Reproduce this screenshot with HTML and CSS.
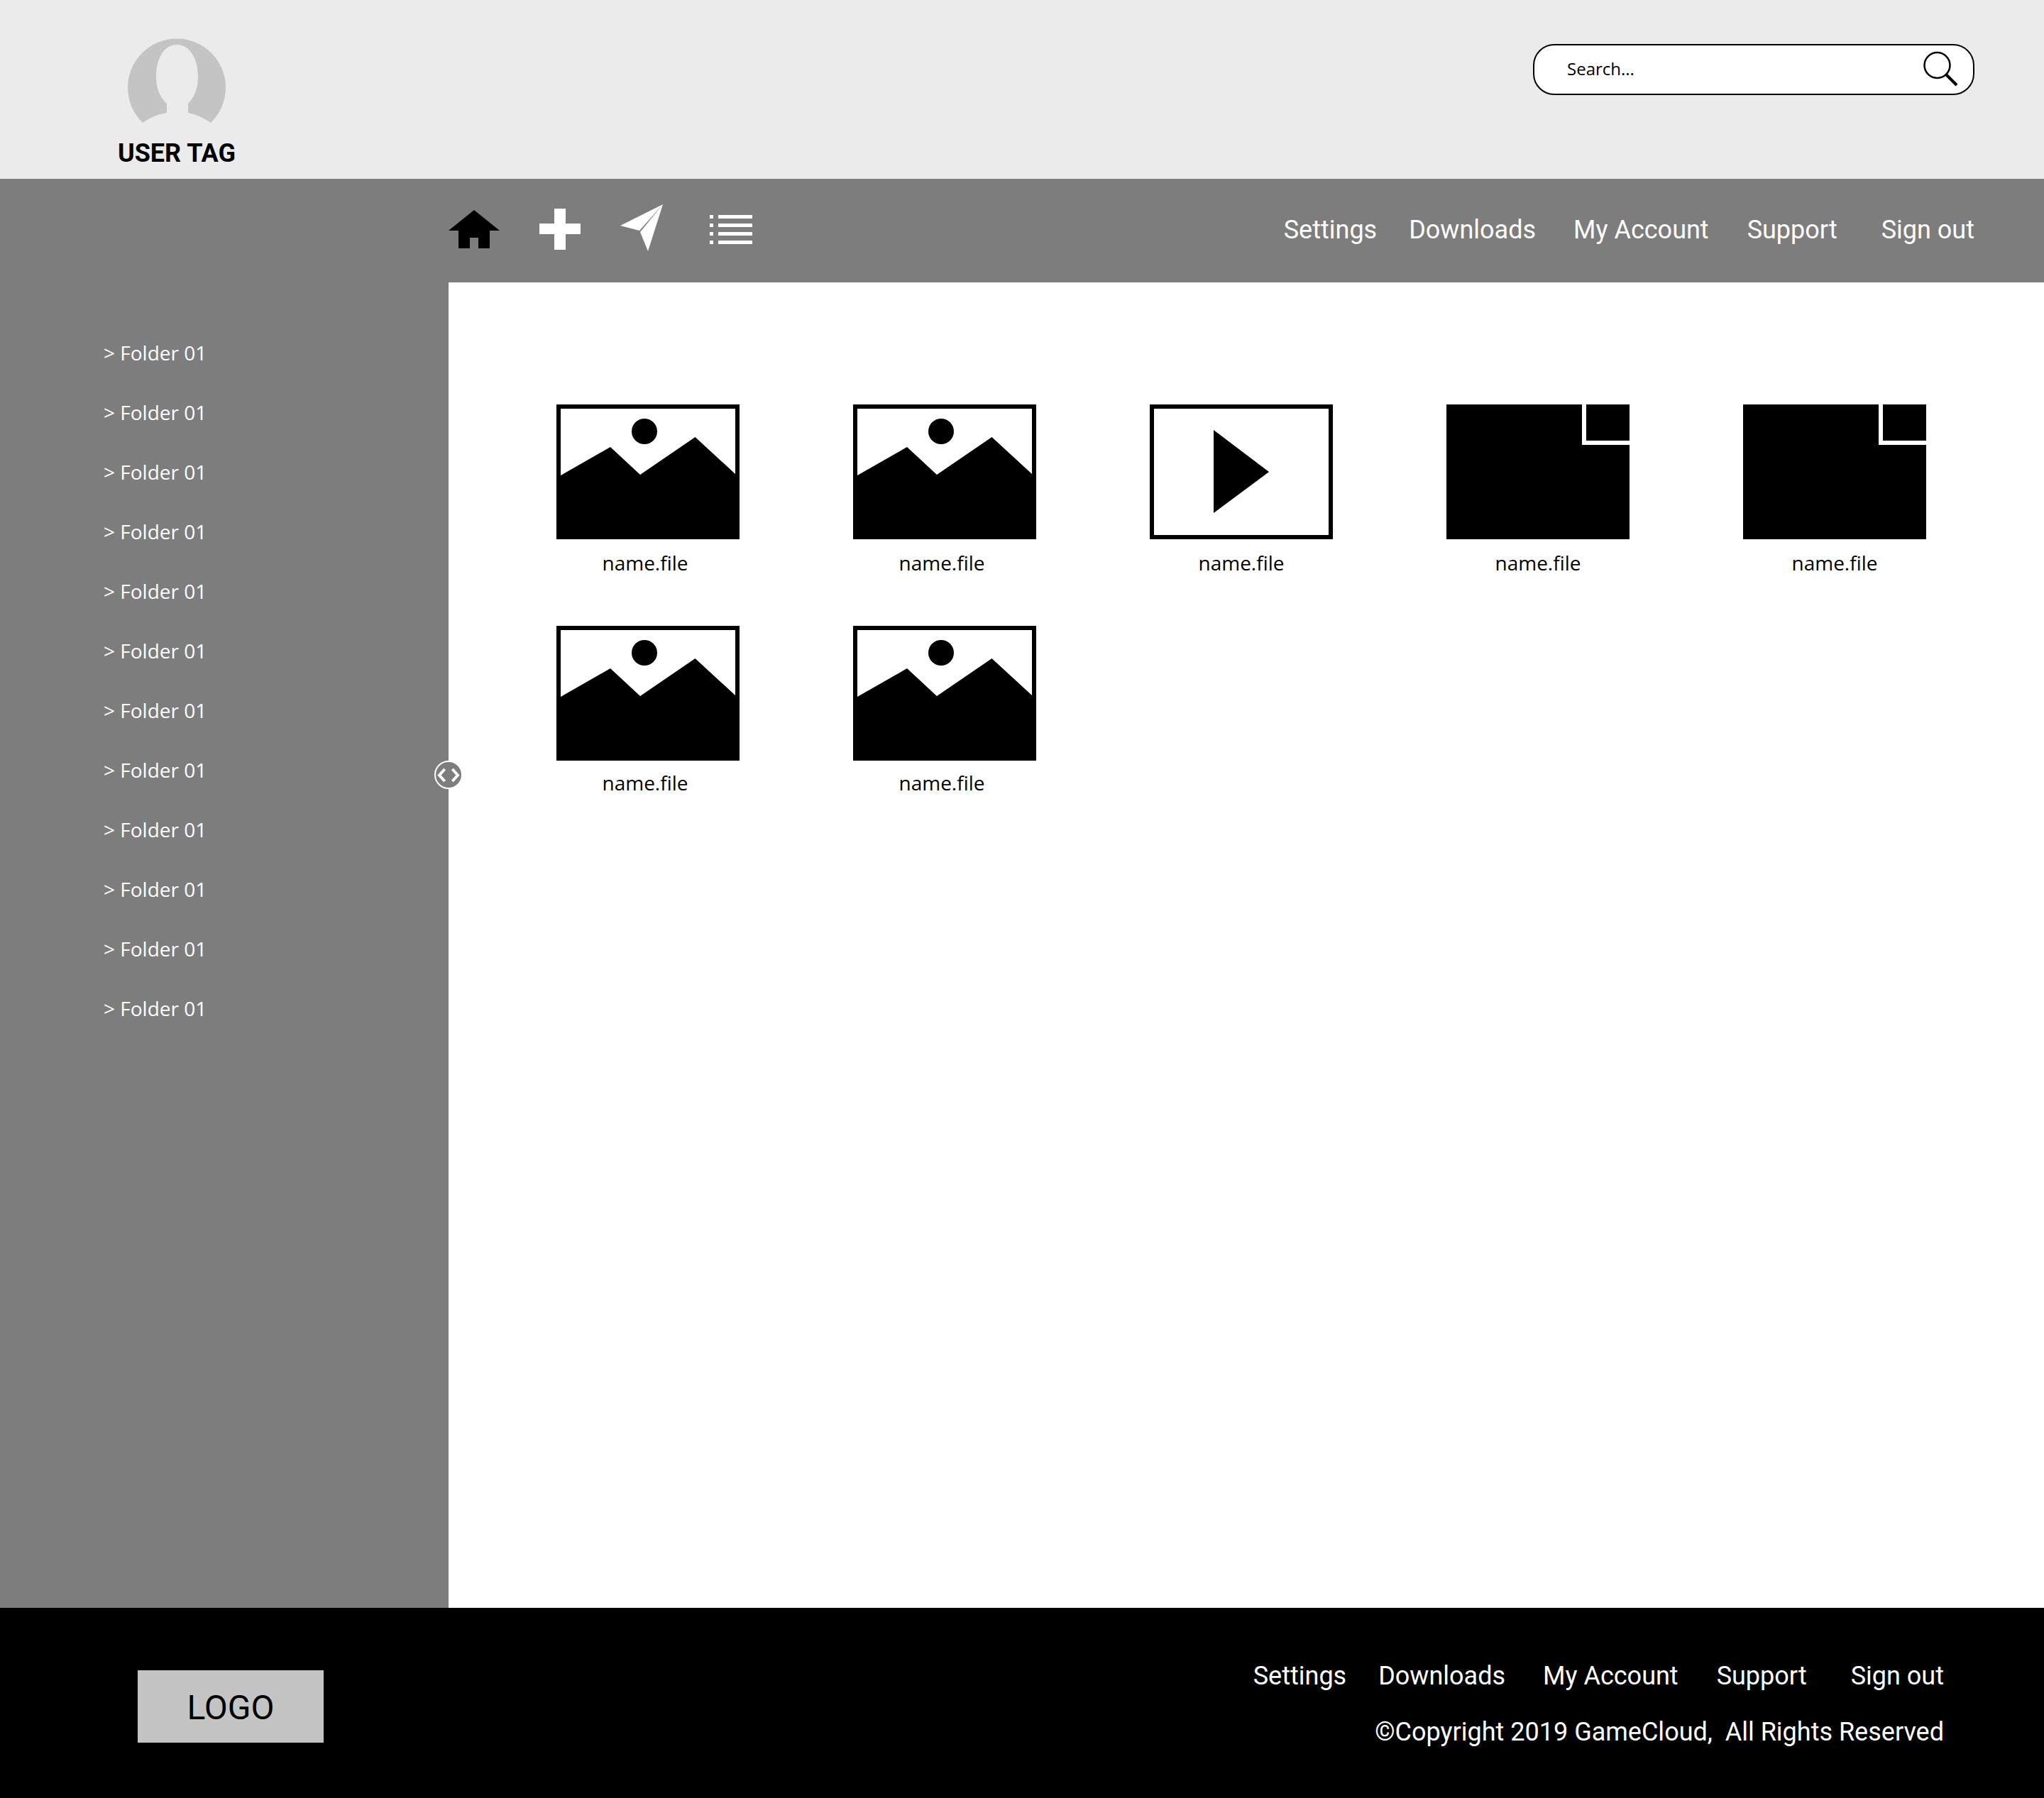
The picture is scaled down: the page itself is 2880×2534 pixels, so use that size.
FILE: index.html
```html
<!DOCTYPE html>
<html lang="en">
<head>
<meta charset="utf-8">
<title>GameCloud</title>
<link rel="stylesheet" href="styles.css">
</head>
<body>
<div class="page">
  <header class="top">
    <div class="user">
      <svg class="avatar" viewBox="0 0 138 120" width="138" height="120">
        <path fill="#c4c4c4" fill-rule="evenodd" d="M21 119A69 69 0 1 1 117 119C107 112 96 107 85 105V92C94 83 99 70 99 54C99 27 86 9 69 9C52 9 40 27 40 54C40 70 45 83 55 92V105C42 107 31 112 21 119Z"/>
      </svg>
      <div class="user-tag">USER TAG</div>
    </div>
    <div class="search">
      <span class="search-text">Search...</span>
      <svg class="search-icon" viewBox="0 0 50 50" width="50" height="50">
        <circle cx="20.500" cy="20" r="18" fill="none" stroke="#000" stroke-width="2.500"/>
        <path d="M33 33L48 48" stroke="#000" stroke-width="4" fill="none"/>
      </svg>
    </div>
  </header>
  <nav class="bar">
    <div class="tools">
      <svg class="tool tool-home" viewBox="0 0 72 54" width="72" height="54"><path fill="#000" d="M36 0L72 29H58V54H42V39H30V54H14V29H0Z"/></svg>
      <svg class="tool tool-plus" viewBox="0 0 58 58" width="58" height="58"><path fill="#fff" d="M21 0H37V21H58V36H37V58H21V36H0V21H21Z"/></svg>
      <svg class="tool tool-send" viewBox="0 0 60 66" width="60" height="66"><path fill="#fff" d="M60 0L0 30L27 37Z"/><path fill="#fff" d="M60 0L28 39L39 66Z"/></svg>
      <svg class="tool tool-list" viewBox="0 0 60 41" width="60" height="41"><path fill="#fff" d="M0 0H5V5H0ZM12 0H60V5H12ZM0 12H5V17H0ZM12 12H60V17H12ZM0 24H5V29H0ZM12 24H60V29H12ZM0 36H5V41H0ZM12 36H60V41H12Z"/></svg>
    </div>
    <div class="links">
      <a class="link link-settings">Settings</a>
      <a class="link link-downloads">Downloads</a>
      <a class="link link-account">My Account</a>
      <a class="link link-support">Support</a>
      <a class="link">Sign out</a>
    </div>
  </nav>
  <div class="body">
    <aside class="side">
      <ul class="folders">
        <li>&gt; Folder 01</li><li>&gt; Folder 01</li><li>&gt; Folder 01</li><li>&gt; Folder 01</li>
        <li>&gt; Folder 01</li><li>&gt; Folder 01</li><li>&gt; Folder 01</li><li>&gt; Folder 01</li>
        <li>&gt; Folder 01</li><li>&gt; Folder 01</li><li>&gt; Folder 01</li><li>&gt; Folder 01</li>
      </ul>
    </aside>
    <svg class="handle" viewBox="0 0 40 40" width="40" height="40">
      <circle cx="20" cy="20" r="19" fill="#7d7d7d" stroke="#fff" stroke-width="2"/>
      <path d="M14.600 12L7 20.500L14.600 29M25.400 12L33 20.500L25.400 29" fill="none" stroke="#fff" stroke-width="4"/>
    </svg>
    <main class="files">
      <figure class="file file-pic">
        <svg class="thumb" viewBox="0 0 258 190" width="258" height="190"><use href="#pic"/></svg>
        <figcaption>name.file</figcaption>
      </figure>
      <figure class="file file-pic">
        <svg class="thumb" viewBox="0 0 258 190" width="258" height="190"><use href="#pic"/></svg>
        <figcaption>name.file</figcaption>
      </figure>
      <figure class="file">
        <svg class="thumb" viewBox="0 0 258 190" width="258" height="190">
          <rect x="3" y="3" width="252" height="184" fill="#fff" stroke="#000" stroke-width="6"/>
          <path d="M90 36L168 95L90 153Z" fill="#000"/>
        </svg>
        <figcaption>name.file</figcaption>
      </figure>
      <figure class="file">
        <svg class="thumb" viewBox="0 0 258 190" width="258" height="190"><use href="#doc"/></svg>
        <figcaption>name.file</figcaption>
      </figure>
      <figure class="file">
        <svg class="thumb" viewBox="0 0 258 190" width="258" height="190"><use href="#doc"/></svg>
        <figcaption>name.file</figcaption>
      </figure>
      <figure class="file file-pic file-low">
        <svg class="thumb" viewBox="0 0 258 190" width="258" height="190"><use href="#pic"/></svg>
        <figcaption>name.file</figcaption>
      </figure>
      <figure class="file file-pic file-low">
        <svg class="thumb" viewBox="0 0 258 190" width="258" height="190"><use href="#pic"/></svg>
        <figcaption>name.file</figcaption>
      </figure>
    </main>
  </div>
  <footer class="foot">
    <div class="logo">LOGO</div>
    <div class="foot-right">
      <div class="links">
        <a class="link link-settings">Settings</a>
        <a class="link link-downloads">Downloads</a>
        <a class="link link-account">My Account</a>
        <a class="link link-support">Support</a>
        <a class="link">Sign out</a>
      </div>
      <div class="copy">©Copyright 2019 GameCloud,&nbsp; All Rights Reserved</div>
    </div>
  </footer>
</div>
<svg class="defs" width="0" height="0">
  <defs>
    <g id="pic">
      <rect x="3" y="3" width="252" height="184" fill="#fff" stroke="#000" stroke-width="6"/>
      <circle cx="124" cy="38" r="18" fill="#000"/>
      <path d="M6 100L76 60L118 99L195.500 46L252 98V187H6Z" fill="#000"/>
    </g>
    <g id="doc">
      <path d="M0 0H191V57H258V190H0Z" fill="#000"/>
      <rect x="197" y="0" width="61" height="51" fill="#000"/>
    </g>
  </defs>
</svg>
</body>
</html>
```
FILE: styles.css
```css
* { box-sizing: border-box; }
html, body { margin: 0; padding: 0; background: #fff; }
.page { width: 2880px; height: 2534px; display: flex; flex-direction: column; font-family: "Roboto", sans-serif; }

.top { height: 252px; flex: none; background: #ebebeb; display: flex; justify-content: space-between; align-items: flex-start; padding: 54px 98px 0 160px; }
.user { width: 178px; display: flex; flex-direction: column; align-items: center; }
.avatar { display: block; }
.user-tag { font-weight: 700; font-size: 36px; line-height: 42px; margin-top: 21px; color: #000; white-space: nowrap; }
.search { width: 622px; height: 72px; margin-top: 8px; background: #fff; border: 2px solid #000; border-radius: 30px; display: flex; align-items: center; justify-content: space-between; padding: 0 21px 0 46px; }
.search-text { font-family: "Open Sans", sans-serif; font-size: 24px; color: #000; margin-top: -4px; }
.search-icon { display: block; margin-top: -2px; }

.bar { height: 146px; flex: none; background: #7d7d7d; display: flex; justify-content: space-between; align-items: center; padding: 0 98px 0 632px; }
.tools { display: flex; align-items: center; margin-top: -4px; }
.tool { display: block; flex: none; }
.tool-plus { margin-left: 56px; }
.tool-send { margin-left: 56px; margin-top: -4px; }
.tool-list { margin-left: 66px; }

.links { display: flex; }
.bar .links { margin-top: -2px; }
.link { display: block; font-size: 36px; line-height: 42px; color: #fff; white-space: nowrap; }
.link-settings { margin-right: 45px; }
.link-downloads { margin-right: 53px; }
.link-account { margin-right: 54px; }
.link-support { margin-right: 62px; }

.body { flex: 1; display: flex; position: relative; min-height: 0; }
.side { width: 632px; flex: none; background: #7d7d7d; padding: 80px 0 0 146px; }
.folders { list-style: none; margin: 0; padding: 0; display: flex; flex-direction: column; gap: 46px; }
.folders li { font-family: "Open Sans", sans-serif; font-size: 28px; line-height: 38px; color: #fff; }
.handle { position: absolute; left: 612px; top: 674px; display: block; }

.files { flex: 1; display: grid; grid-template-columns: repeat(5, 258px); column-gap: 160px; row-gap: 70px; align-content: start; padding: 172px 0 0 152px; }
.file { margin: 0; width: 258px; display: flex; flex-direction: column; align-items: center; }
.thumb { display: block; }
.file figcaption { font-family: "Open Sans", sans-serif; font-size: 28px; line-height: 38px; margin-top: 14px; color: #000; }
.file-pic figcaption { padding-right: 8px; }
.file-low figcaption { margin-top: 12px; }
.defs { position: absolute; }

.foot { height: 268px; flex: none; background: #000; display: flex; justify-content: space-between; padding: 75px 141px 0 194px; }
.logo { width: 262px; height: 102px; margin-top: 13px; padding-top: 2px; background: #c4c4c4; color: #000; font-size: 48px; display: flex; align-items: center; justify-content: center; }
.foot-right { display: flex; flex-direction: column; align-items: flex-end; }
.copy { font-size: 36px; line-height: 42px; color: #fff; margin-top: 37px; white-space: nowrap; }
```
